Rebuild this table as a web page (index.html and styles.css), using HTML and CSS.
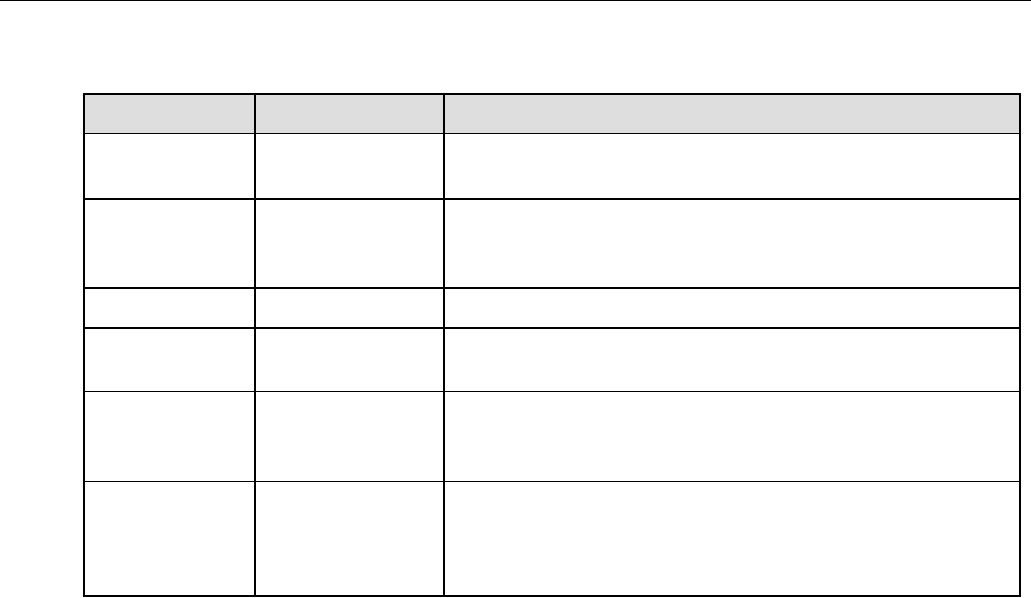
FILE: index.html
```html
<!DOCTYPE html>
<html>
<head>
<meta charset="utf-8">
<link rel="stylesheet" href="styles.css">
</head>
<body>
<div class="rule"></div>
<div class="table">
  <div class="row head thin"><div class="cell"></div><div class="cell"></div><div class="cell"></div></div>
  <div class="row r1"><div class="cell"></div><div class="cell"></div><div class="cell"></div></div>
  <div class="row r2"><div class="cell"></div><div class="cell"></div><div class="cell"></div></div>
  <div class="row r3"><div class="cell"></div><div class="cell"></div><div class="cell"></div></div>
  <div class="row r4 thin"><div class="cell"></div><div class="cell"></div><div class="cell"></div></div>
  <div class="row r5 thin"><div class="cell"></div><div class="cell"></div><div class="cell"></div></div>
  <div class="row r6 last"><div class="cell"></div><div class="cell"></div><div class="cell"></div></div>
</div>
</body>
</html>
```

FILE: styles.css
```css
html, body {
  margin: 0;
  padding: 0;
  background: #fff;
  font-family: "Liberation Sans", Arial, sans-serif;
}
.rule {
  height: 1px;
  background: #000;
}
.table {
  margin: 92px 0 0 83px;
  width: 938px;
  box-sizing: border-box;
  border: 2px solid #000;
  display: flex;
  flex-direction: column;
}
.row {
  display: grid;
  grid-template-columns: 171px 189px 1fr;
  border-bottom: 2px solid #000;
}
.row.thin { border-bottom-width: 1px; }
.row.last { border-bottom: none; }
.cell { border-right: 2px solid #000; }
.cell:last-child { border-right: none; }
.head { background: #dedede; height: 38px; }
.r1 { height: 64px; }
.r2 { height: 87px; }
.r3 { height: 38px; }
.r4 { height: 62px; }
.r5 { height: 89px; }
.r6 { height: 113px; }
```
